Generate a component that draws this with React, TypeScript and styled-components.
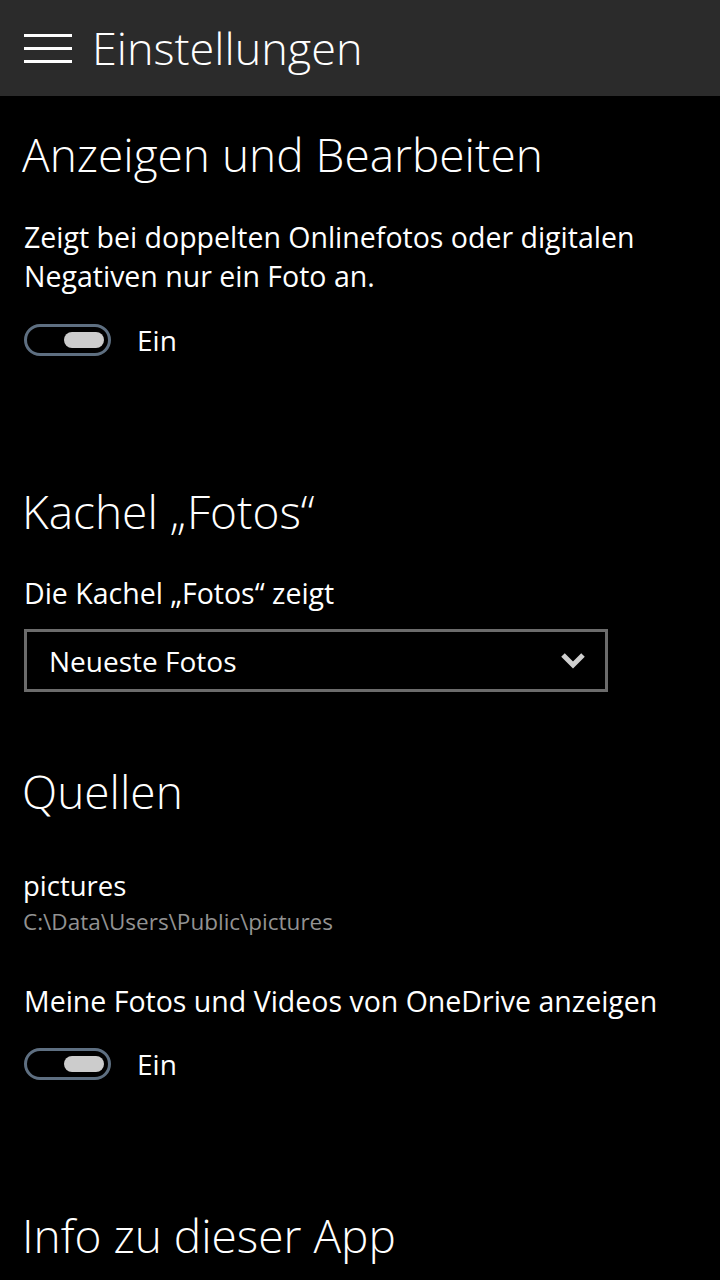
import React from "react";
import styled, { createGlobalStyle } from "styled-components";

const GlobalStyle = createGlobalStyle`
  html, body {
    margin: 0;
    padding: 0;
    background: #000;
  }
  body {
    font-family: "Open Sans", "Noto Sans", sans-serif;
    color: #fff;
  }
`;

const Page = styled.div`
  width: 720px;
  min-height: 1280px;
  background: #000;
  overflow: hidden;
`;

const Header = styled.header`
  height: 96px;
  background: #2b2b2b;
  display: flex;
  align-items: center;
  padding-left: 24px;
  gap: 20px;
`;

const Burger = styled.div`
  width: 48px;
  display: flex;
  flex-direction: column;
  gap: 10px;

  span {
    display: block;
    height: 3px;
    background: #fff;
  }
`;

const HeaderTitle = styled.h1`
  margin: 0;
  font-size: 45px;
  font-weight: 300;
  line-height: 56px;
`;

const Content = styled.main`
  padding: 0 24px;
  display: flex;
  flex-direction: column;
`;

const SectionTitle = styled.h2<{ $top: number }>`
  margin: ${(p) => p.$top}px 0 0 -2px;
  font-size: 46px;
  font-weight: 300;
  line-height: 56px;
`;

const Text = styled.p<{ $top: number }>`
  margin: ${(p) => p.$top}px 0 0;
  font-size: 28.5px;
  line-height: 39px;
`;

const ToggleRow = styled.div<{ $top: number }>`
  margin-top: ${(p) => p.$top}px;
  display: flex;
  align-items: center;
  gap: 26px;
  height: 32px;
`;

const Track = styled.div`
  box-sizing: border-box;
  width: 87px;
  height: 32px;
  border: 3px solid #5e6f81;
  border-radius: 16px;
  display: flex;
  align-items: center;
  justify-content: flex-end;
  padding-right: 4px;
`;

const Knob = styled.div`
  width: 40px;
  height: 16px;
  border-radius: 8px;
  background: #cccccc;
`;

const ToggleLabel = styled.span`
  font-size: 28px;
  line-height: 32px;
`;

const Select = styled.div`
  box-sizing: border-box;
  margin-top: 16px;
  width: 584px;
  height: 63px;
  border: 3px solid #6b6b6b;
  display: flex;
  align-items: center;
  justify-content: space-between;
  padding: 0 20px 0 22px;
  font-size: 28px;
`;

const SourceName = styled.div`
  margin-top: 50px;
  font-size: 27.5px;
  line-height: 34px;
  margin-left: -1px;
`;

const SourcePath = styled.div`
  margin-top: 4px;
  font-size: 22.5px;
  line-height: 30px;
  color: #929292;
  margin-left: -1px;
`;

const Toggle = ({ label, top }: { label: string; top: number }) => (
  <ToggleRow $top={top}>
    <Track>
      <Knob />
    </Track>
    <ToggleLabel>{label}</ToggleLabel>
  </ToggleRow>
);

const Chevron = () => (
  <svg width="24" height="17" viewBox="0 0 24 17">
    <path d="M2 3 L12 13 L22 3" fill="none" stroke="#cfcfcf" strokeWidth="5" />
  </svg>
);

export default function App() {
  return (
    <Page>
      <GlobalStyle />
      <Header>
        <Burger>
          <span />
          <span />
          <span />
        </Burger>
        <HeaderTitle>Einstellungen</HeaderTitle>
      </Header>
      <Content>
        <SectionTitle $top={30}>Anzeigen und Bearbeiten</SectionTitle>
        <Text $top={36}>
          Zeigt bei doppelten Onlinefotos oder digitalen Negativen nur ein Foto an.
        </Text>
        <Toggle label="Ein" top={28} />

        <SectionTitle $top={127}>Kachel „Fotos“</SectionTitle>
        <Text $top={35}>Die Kachel „Fotos“ zeigt</Text>
        <Select>
          <span>Neueste Fotos</span>
          <Chevron />
        </Select>

        <SectionTitle $top={71}>Quellen</SectionTitle>
        <SourceName>pictures</SourceName>
        <SourcePath>C:\Data\Users\Public\pictures</SourcePath>
        <Text $top={45}>Meine Fotos und Videos von OneDrive anzeigen</Text>
        <Toggle label="Ein" top={27} />

        <SectionTitle $top={127}>Info zu dieser App</SectionTitle>
      </Content>
    </Page>
  );
}
